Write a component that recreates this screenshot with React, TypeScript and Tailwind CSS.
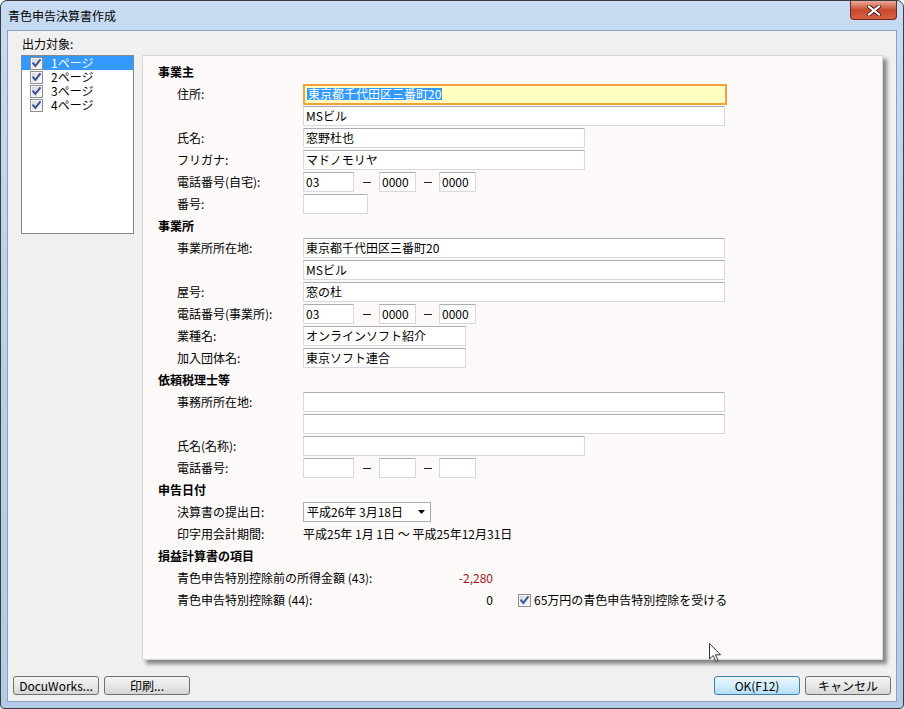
import React from "react";

function TextBox({ w, value, children }: { w: string; value?: string; children?: React.ReactNode }) {
  return (
    <div
      className={`${w} h-[20px] shrink-0 border border-[#d5d9df] border-t-[#abadb3] bg-white flex items-center pl-[2px] text-[12px] leading-none whitespace-nowrap`}
    >
      {value}
      {children}
    </div>
  );
}

function Row({ label, children }: { label: string; children?: React.ReactNode }) {
  return (
    <div className="flex h-[22px] items-center">
      <div className="w-[145px] shrink-0 pl-[19px] whitespace-nowrap">{label}</div>
      {children}
    </div>
  );
}

function Header({ children }: { children: React.ReactNode }) {
  return <div className="flex h-[22px] items-center font-bold">{children}</div>;
}

function Dash({ w }: { w: string }) {
  return (
    <div className={`${w} flex shrink-0 items-center justify-center`}>
      <div className="h-[1px] w-[8px] bg-[#222]" />
    </div>
  );
}

function Phone({ a, b, c }: { a?: string; b?: string; c?: string }) {
  return (
    <>
      <TextBox w="w-[51px]" value={a} />
      <Dash w="w-[25px]" />
      <TextBox w="w-[37px]" value={b} />
      <Dash w="w-[23px]" />
      <TextBox w="w-[37px]" value={c} />
    </>
  );
}

function CheckIcon() {
  return (
    <svg width="13" height="13" viewBox="0 0 13 13" className="shrink-0">
      <defs>
        <linearGradient id="cbg" x1="0" y1="0" x2="1" y2="1">
          <stop offset="0" stopColor="#d3d6da" />
          <stop offset="1" stopColor="#fbfbfb" />
        </linearGradient>
      </defs>
      <rect x="0.5" y="0.5" width="12" height="12" fill="#f6f6f6" stroke="#8f8f8f" />
      <rect x="2" y="2" width="9" height="9" fill="url(#cbg)" />
      <path d="M3.2 6.3 L5.4 8.9 L9.9 3.2" stroke="#3a4f96" strokeWidth="1.9" fill="none" strokeLinecap="square" />
    </svg>
  );
}

function ListItem({ label, selected }: { label: string; selected?: boolean }) {
  return (
    <div
      className={`flex h-[14px] items-center gap-[6px] pl-[8px] text-[12px] leading-[14px] ${
        selected ? "bg-[#3399ff] text-white" : "text-black"
      }`}
    >
      <CheckIcon />
      <span className="pl-[2px]">{label}</span>
    </div>
  );
}

function Button({ label, primary }: { label: string; primary?: boolean }) {
  return (
    <div
      className={`flex h-[19px] w-[86px] items-center justify-center rounded-[3px] border text-[12px] leading-none ${
        primary
          ? "border-[#3c7fb1] bg-gradient-to-b from-[#ecf7fd] via-[#d3eefb] to-[#b3ddf4]"
          : "border-[#707070] bg-gradient-to-b from-[#f4f4f4] via-[#e8e8e8] to-[#d6d6d6]"
      }`}
    >
      {label}
    </div>
  );
}

export default function App() {
  return (
    <div className="h-[709px] w-[904px] overflow-hidden [font-family:'Noto_Sans_CJK_JP','Noto_Sans',sans-serif] text-[12px] leading-none text-black">
      <div className="flex h-[709px] w-[904px] flex-col rounded-t-[7px] rounded-b-[4px] border border-[#3c3c3c] bg-gradient-to-b from-[#c7dbf2] via-[#b9d0ea] to-[#b3cbe6]">
        {/* title bar */}
        <div className="flex h-[29px] items-start justify-between">
          <div className="flex h-[29px] items-center pl-[7px] text-[12px] text-black">青色申告決算書作成</div>
          <div className="mr-[6px] flex h-[19px] w-[47px] items-center justify-center rounded-b-[4px] border border-t-0 border-[#6b2a20] bg-gradient-to-b from-[#e9a99b] via-[#c9482f] to-[#d6603f]">
            <svg width="14" height="11" viewBox="0 0 14 11">
              <path d="M2 1.5 L12 9.5 M12 1.5 L2 9.5" stroke="#4a1a10" strokeWidth="4" strokeLinecap="square" />
              <path d="M2 1.5 L12 9.5 M12 1.5 L2 9.5" stroke="#ffffff" strokeWidth="2.2" strokeLinecap="square" />
            </svg>
          </div>
        </div>
        {/* client */}
        <div className="mx-[6px] flex h-[672px] flex-col border border-[#8aa3c1] bg-[#f0f0f0] pl-[13px] pr-[5px] pt-[7px]">
          <div className="h-[14px] pl-[1px] text-[12px]">出力対象:</div>
          <div className="mt-[3px] flex h-[605px] gap-[8px]">
            <div className="h-[179px] w-[113px] shrink-0 border border-[#828790] bg-white">
              <ListItem label="1ページ" selected />
              <ListItem label="2ページ" />
              <ListItem label="3ページ" />
              <ListItem label="4ページ" />
            </div>
            <div className="relative h-[605px] w-[741px] border border-[#d6d6d6] bg-[#fdf9f8] pl-[15px] pt-[5px] shadow-[4px_4px_4px_rgba(0,0,0,0.45)]">
              <Header>事業主</Header>
              <Row label="住所:">
                <div className="flex h-[21px] w-[424px] shrink-0 items-center border-2 border-[#f3a23a] bg-[#ffffc2] pl-[2px]">
                  <span className="bg-[#3399ff] px-[1px] text-white">東京都千代田区三番町20</span>
                </div>
              </Row>
              <Row label="">
                <TextBox w="w-[422px]" value="MSビル" />
              </Row>
              <Row label="氏名:">
                <TextBox w="w-[282px]" value="窓野杜也" />
              </Row>
              <Row label="フリガナ:">
                <TextBox w="w-[282px]" value="マドノモリヤ" />
              </Row>
              <Row label="電話番号(自宅):">
                <Phone a="03" b="0000" c="0000" />
              </Row>
              <Row label="番号:">
                <TextBox w="w-[65px]" />
              </Row>

              <Header>事業所</Header>
              <Row label="事業所所在地:">
                <TextBox w="w-[422px]" value="東京都千代田区三番町20" />
              </Row>
              <Row label="">
                <TextBox w="w-[422px]" value="MSビル" />
              </Row>
              <Row label="屋号:">
                <TextBox w="w-[422px]" value="窓の杜" />
              </Row>
              <Row label="電話番号(事業所):">
                <Phone a="03" b="0000" c="0000" />
              </Row>
              <Row label="業種名:">
                <TextBox w="w-[163px]" value="オンラインソフト紹介" />
              </Row>
              <Row label="加入団体名:">
                <TextBox w="w-[163px]" value="東京ソフト連合" />
              </Row>

              <Header>依頼税理士等</Header>
              <Row label="事務所所在地:">
                <TextBox w="w-[422px]" />
              </Row>
              <Row label="">
                <TextBox w="w-[422px]" />
              </Row>
              <Row label="氏名(名称):">
                <TextBox w="w-[282px]" />
              </Row>
              <Row label="電話番号:">
                <Phone />
              </Row>

              <Header>申告日付</Header>
              <Row label="決算書の提出日:">
                <div className="flex h-[20px] w-[128px] shrink-0 items-center justify-between border border-[#acacac] bg-white pl-[3px] pr-[5px]">
                  <span>平成26年 3月18日</span>
                  <svg width="7" height="4" viewBox="0 0 7 4">
                    <path d="M0 0 L7 0 L3.5 4 Z" fill="#000" />
                  </svg>
                </div>
              </Row>
              <Row label="印字用会計期間:">
                <span className="whitespace-nowrap">平成25年 1月 1日 ～ 平成25年12月31日</span>
              </Row>

              <Header>損益計算書の項目</Header>
              <div className="flex h-[22px] items-center">
                <div className="flex w-[335px] justify-between pl-[19px]">
                  <span>青色申告特別控除前の所得金額 (43):</span>
                  <span className="text-[#a01818]">-2,280</span>
                </div>
              </div>
              <div className="flex h-[22px] items-center">
                <div className="flex w-[335px] justify-between pl-[19px]">
                  <span>青色申告特別控除額 (44):</span>
                  <span>0</span>
                </div>
                <div className="ml-[25px] flex items-center gap-[3px]">
                  <CheckIcon />
                  <span>65万円の青色申告特別控除を受ける</span>
                </div>
              </div>

              {/* mouse pointer */}
              <svg
                className="absolute left-[566px] top-[587px]"
                width="13"
                height="20"
                viewBox="0 0 13 20"
              >
                <path
                  d="M0.5 0.5 L0.5 16 L4.2 12.5 L6.8 18.5 L9 17.5 L6.5 11.8 L11.5 11.8 Z"
                  fill="#ffffff"
                  stroke="#333"
                  strokeWidth="1"
                />
              </svg>
            </div>
          </div>
          <div className="mt-[16px] flex h-[19px] items-center justify-between">
            <div className="-ml-[8px] flex gap-[5px]">
              <Button label="DocuWorks..." />
              <Button label="印刷..." />
            </div>
            <div className="flex gap-[5px]">
              <Button label="OK(F12)" primary />
              <Button label="キャンセル" />
            </div>
          </div>
        </div>
      </div>
    </div>
  );
}
